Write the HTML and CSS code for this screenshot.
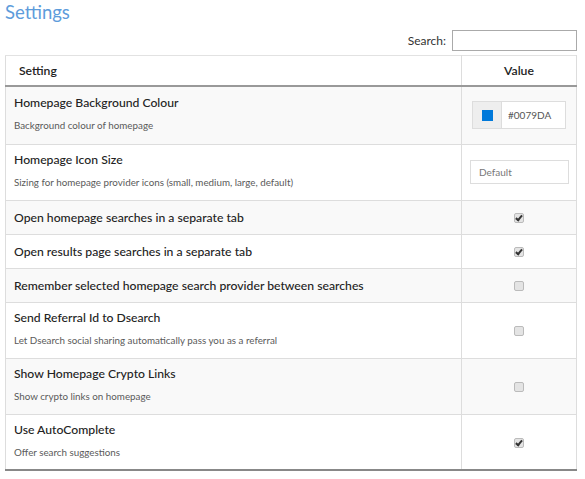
FILE: index.html
```html
<!DOCTYPE html>
<html lang="en">
<head>
    <meta charset="UTF-8">
    <title>Settings</title>
    <link rel="stylesheet" href="styles.css">
</head>
<body>

    <h1>Settings</h1>

    <div class="search-bar">
        <label for="searchInput">Search:</label>
        <input type="text" id="searchInput">
    </div>

    <table class="settings">
        <thead>
            <tr>
                <th class="col-name">Setting</th>
                <th class="col-value">Value</th>
            </tr>
        </thead>
        <tbody>
            <tr class="tall">
                <td>
                    <div class="name">Homepage Background Colour</div>
                    <div class="desc">Background colour of homepage</div>
                </td>
                <td class="value">
                    <div class="colour-group">
                        <span class="swatch-box"><span class="swatch"></span></span>
                        <input type="text" class="colour-text" value="#0079DA">
                    </div>
                </td>
            </tr>
            <tr class="tall">
                <td>
                    <div class="name">Homepage Icon Size</div>
                    <div class="desc">Sizing for homepage provider icons (small, medium, large, default)</div>
                </td>
                <td class="value">
                    <input type="text" class="size-text" placeholder="Default">
                </td>
            </tr>
            <tr>
                <td><div class="name">Open homepage searches in a separate tab</div></td>
                <td class="value"><span class="check on"></span></td>
            </tr>
            <tr>
                <td><div class="name">Open results page searches in a separate tab</div></td>
                <td class="value"><span class="check on"></span></td>
            </tr>
            <tr>
                <td><div class="name">Remember selected homepage search provider between searches</div></td>
                <td class="value"><span class="check"></span></td>
            </tr>
            <tr class="tall">
                <td>
                    <div class="name">Send Referral Id to Dsearch</div>
                    <div class="desc">Let Dsearch social sharing automatically pass you as a referral</div>
                </td>
                <td class="value"><span class="check"></span></td>
            </tr>
            <tr class="tall">
                <td>
                    <div class="name">Show Homepage Crypto Links</div>
                    <div class="desc">Show crypto links on homepage</div>
                </td>
                <td class="value"><span class="check"></span></td>
            </tr>
            <tr class="tall">
                <td>
                    <div class="name">Use AutoComplete</div>
                    <div class="desc">Offer search suggestions</div>
                </td>
                <td class="value"><span class="check on"></span></td>
            </tr>
        </tbody>
    </table>

</body>
</html>
```

FILE: styles.css
```css
body { font-family: Lato, "Open Sans", sans-serif; margin: 0; padding: 0 8px 0 5px; color: #222; background: #fff; }
h1 { font-size: 18.5px; font-weight: 400; color: #5d9cdb; margin: 0; padding-top: 0; height: 27px; line-height: 24px; }

.search-bar { display: flex; justify-content: flex-end; align-items: center; gap: 6px; height: 27px; font-size: 12px; color: #333; }
.search-bar input { width: 119px; height: 17px; border: 1px solid #aaa; padding: 1px 2px; margin: 0; }

.settings { width: 100%; table-layout: fixed; border-collapse: collapse; margin-top: 1px; font-size: 12.2px; }
.settings th, .settings td { border: 1px solid #ddd; padding: 0 8px; text-align: left; vertical-align: middle; }
.settings thead th { height: 29px; border-top-color: #e2e2e2; border-bottom: 2px solid #999; font-weight: 600; padding-left: 13px; }
.settings th.col-value { width: 98px; text-align: center; padding: 0 8px; }
.settings tbody tr { height: 34px; }
.settings tbody tr.tall { height: 56px; }
.settings tbody tr.tall:first-child { height: 58px; }
.settings tbody tr.tall td:first-child { padding-bottom: 4px; }
.settings tbody tr:nth-child(odd) { background: #f9f9f9; }
.settings tbody tr:last-child td { border-bottom: 2px solid #888; }
.settings td.value { text-align: center; }

.name { font-weight: 500; color: #222; }
.desc { font-size: 9.8px; color: #5a5a5a; margin-top: 9px; }

.colour-group { display: inline-flex; height: 26px; border: 1px solid #ddd; background: #fff; vertical-align: middle; }
.swatch-box { width: 28px; background: #eee; border-right: 1px solid #ddd; display: flex; align-items: center; justify-content: center; }
.swatch { width: 11px; height: 11px; background: #0079da; }
.colour-text { width: 51px; border: 0; padding: 0 6px; font: 10px Lato, sans-serif; color: #555; background: transparent; }
.size-text { width: 81px; height: 22px; border: 1px solid #ddd; padding: 0 8px; font: 10px Lato, sans-serif; vertical-align: middle; }
.size-text::placeholder { color: #777; }

.check { display: inline-block; width: 8px; height: 8px; border: 1px solid #bbb; border-radius: 2px; background: #e4e4e4; position: relative; vertical-align: middle; }
.check.on::after { content: ""; position: absolute; left: 2px; top: 0; width: 2px; height: 5px; border: solid #333; border-width: 0 2px 2px 0; transform: rotate(40deg); }
```
